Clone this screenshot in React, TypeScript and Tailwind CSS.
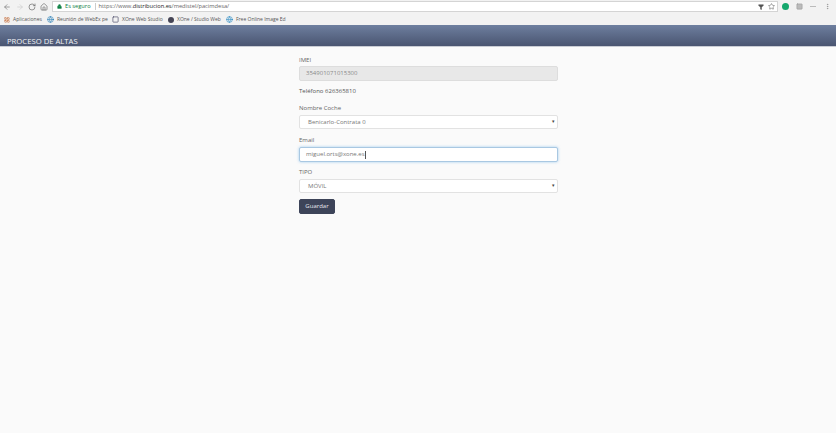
import { ArrowLeft, ArrowRight, RotateCw, Home, Lock, Star, Filter, LayoutGrid, Globe, Square, MoreVertical } from 'lucide-react';

const font = "font-['Open_Sans','Noto_Sans',sans-serif]";

function Bookmark({ icon, label, width }: { icon: React.ReactNode; label: string; width: string }) {
    return (
        <div className={`flex items-center gap-[3px] shrink-0 ${width}`}>
            {icon}
            <span className="text-[5px] text-[#555] whitespace-nowrap">{label}</span>
        </div>
    );
}

export default function App() {
    return (
        <div className={`h-[433px] w-[836px] overflow-hidden bg-[#fafafa] flex flex-col ${font}`}>
            {/* Browser toolbar */}
            <div className="h-[13px] bg-[#f2f2f2] flex items-center pl-[3px] shrink-0">
                <ArrowLeft className="w-[8px] h-[8px] text-[#777] shrink-0" />
                <ArrowRight className="w-[8px] h-[8px] text-[#ccc] ml-[5px] shrink-0" />
                <RotateCw className="w-[8px] h-[8px] text-[#666] ml-[4px] shrink-0" />
                <Home className="w-[8px] h-[8px] text-[#666] ml-[4px] shrink-0" />
                <div className="ml-[4px] h-[11px] w-[726px] bg-white border border-[#d4d4d4] flex items-center pl-[4px] pr-[2px] shrink-0">
                    <Lock className="w-[5px] h-[5px] text-[#0b8043] fill-[#0b8043] shrink-0" />
                    <span className="ml-[3px] text-[5.7px] text-[#0b8043]">Es seguro</span>
                    <span className="ml-[4px] mr-[3px] h-[7px] w-px bg-[#ccc]" />
                    <span className="text-[5.7px] text-[#666] whitespace-nowrap">
                        https://www.<span className="text-[#222]">distribucion.es</span>/medistel/pacimdesa/
                    </span>
                    <Filter className="ml-auto w-[6px] h-[6px] text-[#555] fill-[#555]" />
                    <Star className="ml-[4px] w-[7px] h-[7px] text-[#666]" />
                </div>
                <div className="ml-[4px] w-[7px] h-[7px] rounded-full bg-[#14a76c] shrink-0" />
                <Square className="ml-[7px] w-[7px] h-[7px] text-[#999] fill-[#bbb] shrink-0" />
                <div className="ml-[7px] w-[6px] h-px bg-[#bbb] shrink-0" />
                <MoreVertical className="ml-[8px] w-[7px] h-[7px] text-[#888] shrink-0" />
            </div>

            {/* Bookmarks */}
            <div className="h-[12px] bg-[#f2f2f2] flex items-center pl-[4px] pt-[1px] shrink-0">
                <Bookmark icon={<LayoutGrid className="w-[6px] h-[6px] text-[#c0622d] shrink-0" />} label="Aplicaciones" width="w-[43px]" />
                <Bookmark icon={<Globe className="w-[7px] h-[7px] text-[#2a7fb8] shrink-0" />} label="Reunión de WebEx pe" width="w-[65px]" />
                <Bookmark icon={<Square className="w-[7px] h-[7px] text-[#335] shrink-0" />} label="XOne Web Studio" width="w-[56px]" />
                <Bookmark icon={<div className="w-[6px] h-[6px] rounded-full bg-[#445] shrink-0" />} label="XOne / Studio Web" width="w-[58px]" />
                <Bookmark icon={<Globe className="w-[7px] h-[7px] text-[#2b8cc4] shrink-0" />} label="Free Online Image Ed" width="w-[62px]" />
            </div>

            {/* Header band */}
            <header className="h-[22px] bg-gradient-to-b from-[#6e7f9f] to-[#4a5571] border-b border-[#c9ccd4] flex items-end pl-[7px] shrink-0">
                <span className="text-[7.7px] leading-[10px] text-[#f2f4f7]">PROCESO DE ALTAS</span>
            </header>

            {/* Form */}
            <main className="w-[259px] ml-[299px] pt-[8px] text-[6px] text-[#666]">
                <label className="block leading-[10px] mb-[1px]">IMEI</label>
                <div className="h-[15px] rounded-[2px] bg-[#e8e8e8] border border-[#ddd] flex items-center pl-[6px] text-[#888]">
                    354901071015300
                </div>
                <p className="mt-[5px] leading-[10px] text-[#555]">Teléfono 626365810</p>
                <label className="block mt-[7px] leading-[10px] mb-[2px]">Nombre Coche</label>
                <div className="h-[14px] rounded-[2px] bg-white border border-[#e2e2e2] flex items-center justify-between pl-[8px] pr-[2px] text-[#777]">
                    <span>Benicarlo-Contrata 0</span>
                    <span className="text-[5px] text-[#444]">▾</span>
                </div>
                <label className="block mt-[6px] leading-[10px] mb-[2px]">Email</label>
                <div className="h-[15px] rounded-[2px] bg-white border border-[#a9c8e2] shadow-[0_0_3px_rgba(102,175,233,0.6)] flex items-center pl-[6px] text-[#777]">
                    miguel.orts@xone.es<span className="w-px h-[8px] bg-[#555]" />
                </div>
                <label className="block mt-[5px] leading-[10px] mb-[2px]">TIPO</label>
                <div className="h-[14px] rounded-[2px] bg-white border border-[#e2e2e2] flex items-center justify-between pl-[8px] pr-[2px] text-[#777]">
                    <span>MÓVIL</span>
                    <span className="text-[5px] text-[#444]">▾</span>
                </div>
                <button className="mt-[6px] block w-[36px] h-[15px] rounded-[2px] bg-[#3d4459] border border-[#3d4459] text-[#e8e8ee] text-[6px]">
                    Guardar
                </button>
            </main>
        </div>
    );
}
